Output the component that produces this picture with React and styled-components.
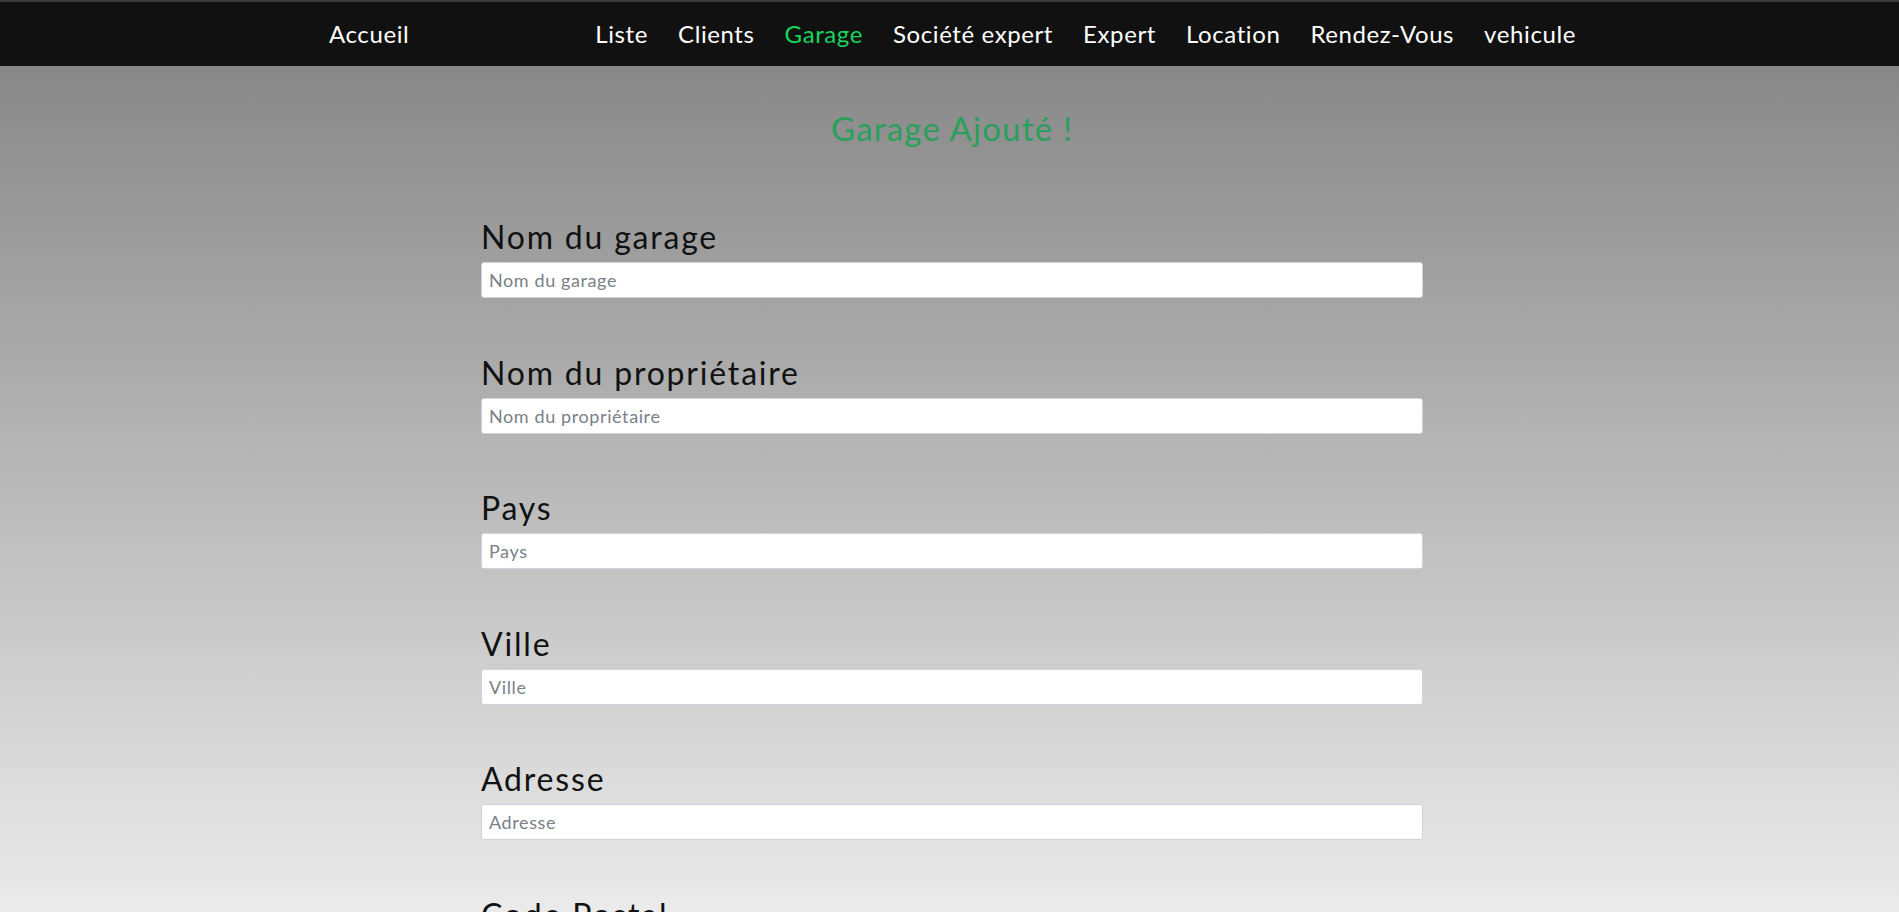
import styled, { createGlobalStyle } from 'styled-components';

const GlobalStyle = createGlobalStyle`
  html, body {
    margin: 0;
    padding: 0;
  }
  body {
    font-family: 'Lato', 'Open Sans', sans-serif;
    background: #ebebeb;
  }
  * {
    box-sizing: border-box;
  }
`;

const links = ['Liste', 'Clients', 'Garage', 'Société expert', 'Expert', 'Location', 'Rendez-Vous', 'vehicule'];

const fields = [
  'Nom du garage',
  'Nom du propriétaire',
  'Pays',
  'Ville',
  'Adresse',
  'Code Postal',
];

export default function App() {
  return (
    <>
      <GlobalStyle />
      <Page>
        <NavBar>
          <Brand href="#">Accueil</Brand>
          <NavList>
            {links.map((l) => (
              <NavItem key={l} $active={l === 'Garage'}>
                {l}
              </NavItem>
            ))}
          </NavList>
        </NavBar>
        <Main>
          <Column>
            <Success>Garage Ajouté !</Success>
            <Form>
              {fields.map((f) => (
                <Group key={f}>
                  <Label>{f}</Label>
                  <Input type="text" placeholder={f} />
                </Group>
              ))}
            </Form>
          </Column>
        </Main>
      </Page>
    </>
  );
}

const Page = styled.div`
  overflow: hidden;
  height: 912px;
`;

const NavBar = styled.nav`
  height: 66px;
  background-color: #111111;
  border-top: 2px solid #3a3a3a;
  display: flex;
  align-items: center;
  padding-left: 329px;
  padding-bottom: 1px;
`;

const Brand = styled.a`
  color: #ffffff;
  font-size: 24px;
  letter-spacing: 0.6px;
  text-decoration: none;
  margin-right: 186px;
`;

const NavList = styled.ul`
  display: flex;
  gap: 30px;
  list-style: none;
  margin: 0;
  padding: 0;
`;

const NavItem = styled.li`
  color: ${(p) => (p.$active ? '#17d55c' : '#ffffff')};
  font-size: 24px;
  letter-spacing: 0.6px;
  cursor: pointer;
`;

const Main = styled.main`
  height: 846px;
  background: linear-gradient(to bottom, #888888 0%, #ebebeb 100%);
  display: flex;
  justify-content: center;
`;

const Column = styled.div`
  width: 942px;
  margin-left: 5px;
`;

const Success = styled.h2`
  margin: 43px 0 0;
  text-align: center;
  color: #299f5c;
  font-size: 33px;
  letter-spacing: 1.2px;
  font-weight: 400;
  line-height: 38px;
`;

const Form = styled.form`
  margin-top: 76px;
  display: flex;
  flex-direction: column;
  gap: 60.6px;
`;

const Group = styled.div`
  display: flex;
  flex-direction: column;
  gap: 11px;
`;

const Label = styled.label`
  color: #111111;
  font-size: 32px;
  letter-spacing: 1.8px;
  line-height: 28px;
`;

const Input = styled.input`
  height: 36px;
  width: 100%;
  border: 1px solid #ced4da;
  border-radius: 3px;
  background: #ffffff;
  padding: 0 7px;
  font-family: 'Lato', sans-serif;
  font-size: 18px;
  letter-spacing: 0.6px;
  color: #495057;
  &::placeholder {
    color: #7a8088;
  }
`;
